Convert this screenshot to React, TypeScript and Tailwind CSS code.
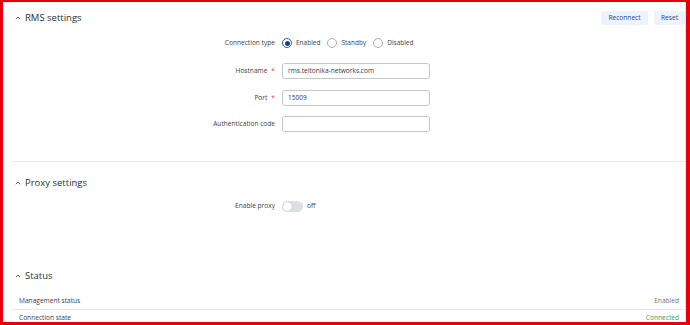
import React from 'react'

const Chevron = () => (
  <svg width="6" height="4" viewBox="0 0 6 4" className="shrink-0">
    <polyline points="0.8,3.2 3,1 5.2,3.2" fill="none" stroke="#555b63" strokeWidth="1" />
  </svg>
)

function SectionHeader({ title, children }: { title: string; children?: React.ReactNode }) {
  return (
    <div className="flex items-center h-[16px] pl-[12px]">
      <Chevron />
      <span className="ml-[4px] text-[9.5px] font-medium text-[#2b2f36]">{title}</span>
      <div className="ml-auto flex items-center gap-[6px]">{children}</div>
    </div>
  )
}

function Label({ text, required }: { text: string; required?: boolean }) {
  return (
    <div className="w-[272px] shrink-0 text-right text-[6.6px] text-[#3a3f47]">
      {text}
      {required && <span className="text-[#e0413a] ml-[4px]">*</span>}
    </div>
  )
}

function Radio({ label, checked }: { label: string; checked?: boolean }) {
  return (
    <div className="flex items-center">
      <span
        className={`flex items-center justify-center w-[10px] h-[10px] rounded-full border ${
          checked ? 'border-[#2c5bb0]' : 'border-[#a9adb3]'
        }`}
      >
        {checked && <span className="w-[5px] h-[5px] rounded-full bg-[#1d3f8f]" />}
      </span>
      <span className="ml-[4px] text-[6.5px] text-[#3a3f47]">{label}</span>
    </div>
  )
}

function TextInput({ value }: { value?: string }) {
  return (
    <div className="ml-[7px] w-[148px] h-[16px] rounded-[3px] border border-[#c3c7cd] flex items-center pl-[5px] text-[6.6px] text-[#333a44]">
      {value}
    </div>
  )
}

export default function App() {
  return (
    <div
      className="w-[690px] h-[325px] bg-white border-red-600 border-l-[3px] border-t-[2px] border-r-[4px] border-b-[3px] overflow-hidden"
      style={{ fontFamily: '"Open Sans", "Noto Sans", sans-serif' }}
    >
      <div className="h-full border-r border-[#e3e6ea] overflow-hidden">
        {/* RMS settings */}
        <div className="pt-[8px]">
          <SectionHeader title="RMS settings">
            <button className="w-[47px] h-[14px] rounded-[2px] bg-[#edf3fc] text-[6.6px] font-medium text-[#23428f]">
              Reconnect
            </button>
            <button className="w-[31px] h-[14px] rounded-[2px] bg-[#edf3fc] text-[6.6px] font-medium text-[#23428f]">
              Reset
            </button>
          </SectionHeader>
        </div>

        <div className="mt-[9px] flex items-center h-[16px]">
          <Label text="Connection type" />
          <div className="ml-[7px] flex items-center gap-[7px]">
            <Radio label="Enabled" checked />
            <Radio label="Standby" />
            <Radio label="Disabled" />
          </div>
        </div>
        <div className="mt-[12px] flex items-center">
          <Label text="Hostname" required />
          <TextInput value="rms.teltonika-networks.com" />
        </div>
        <div className="mt-[11px] flex items-center">
          <Label text="Port" required />
          <TextInput value="15009" />
        </div>
        <div className="mt-[10px] flex items-center">
          <Label text="Authentication code" />
          <TextInput />
        </div>

        <div className="mt-[29px] ml-[9px] h-px bg-[#e6e8eb]" />

        {/* Proxy settings */}
        <div className="mt-[13px]">
          <SectionHeader title="Proxy settings" />
        </div>
        <div className="mt-[7px] flex items-center h-[16px]">
          <Label text="Enable proxy" />
          <div className="ml-[7px] w-[21px] h-[11px] rounded-full bg-[#dcdfe3] flex items-center px-[1px]">
            <span className="w-[9px] h-[9px] rounded-full bg-white shadow-[0_0_1px_rgba(0,0,0,0.3)]" />
          </div>
          <span className="ml-[4px] text-[6.6px] text-[#3a3f47]">off</span>
        </div>

        {/* Status */}
        <div className="mt-[54px]">
          <SectionHeader title="Status" />
        </div>
        <div className="mt-[8px] ml-[9px] text-[6.6px]">
          <div className="h-[18px] flex items-center justify-between pl-[7px] pr-[6px] border-b border-[#e6e8eb]">
            <span className="text-[#3a3f47]">Management status</span>
            <span className="text-[#6f747b]">Enabled</span>
          </div>
          <div className="h-[16px] flex items-center justify-between pl-[7px] pr-[6px]">
            <span className="text-[#3a3f47]">Connection state</span>
            <span className="text-[#3b9a5c]">Connected</span>
          </div>
        </div>
      </div>
    </div>
  )
}
